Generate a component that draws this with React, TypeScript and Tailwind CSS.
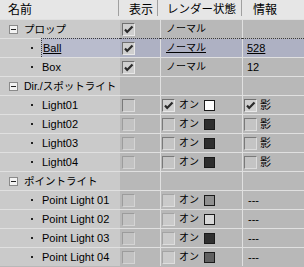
import type { ReactNode } from 'react';

type Box = 'on' | 'off' | 'dim' | 'pale';

type Row =
  | { kind: 'group'; name: string; show?: Box; render?: string }
  | {
      kind: 'item';
      name: string;
      selected?: boolean;
      show: Box;
      render: ReactNode;
      info: ReactNode;
    };

function Check({ state }: { state: Box }) {
  const styles: Record<Box, string> = {
    on: 'border-t-[#707070] border-l-[#707070] border-b-[#e8e8e8] border-r-[#e8e8e8] bg-[#cfcfcf]',
    off: 'border-t-[#7a7a7a] border-l-[#7a7a7a] border-b-[#dcdcdc] border-r-[#dcdcdc] bg-[#c4c4c4]',
    dim: 'border-t-[#9c9c9c] border-l-[#9c9c9c] border-b-[#d4d4d4] border-r-[#d4d4d4] bg-[#c2c2c2]',
    pale: 'border-t-[#a4a4a4] border-l-[#a4a4a4] border-b-[#dedede] border-r-[#dedede] bg-[#cacaca]',
  };
  return (
    <span className={`relative inline-block w-[13px] h-[13px] shrink-0 border ${styles[state]}`}>
      {state === 'on' && (
        <svg width="11" height="11" viewBox="0 0 11 11" className="absolute left-0 top-0">
          <path d="M2 5.5 L4.2 8 L9.5 2.5" stroke="#2a2a2a" strokeWidth="2.2" fill="none" />
        </svg>
      )}
    </span>
  );
}

function Swatch({ color }: { color: string }) {
  return (
    <span
      className="inline-block w-[11px] h-[11px] ml-[5px] shrink-0 border border-[#1a1a1a]"
      style={{ backgroundColor: color }}
    />
  );
}

function LightRender({ on, box, color }: { on?: boolean; box: Box; color: string }) {
  return (
    <div className="flex items-center pl-[1px] whitespace-nowrap">
      <Check state={on ? 'on' : box} />
      <span className="pl-[4px] text-[10px]">オン</span>
      <Swatch color={color} />
    </div>
  );
}

function Shadow({ on }: { on?: boolean }) {
  return (
    <div className="flex items-center pl-[1px]">
      <Check state={on ? 'on' : 'off'} />
      <span className="pl-[3px]">影</span>
    </div>
  );
}

const normal = 'pl-[5px] text-[10px] whitespace-nowrap';

const rows: Row[] = [
  { kind: 'group', name: 'プロップ', show: 'on', render: 'ノーマル' },
  {
    kind: 'item',
    name: 'Ball',
    selected: true,
    show: 'on',
    render: <span className={`${normal} underline`}>ノーマル</span>,
    info: <span className="pl-[4px] underline">528</span>,
  },
  {
    kind: 'item',
    name: 'Box',
    show: 'on',
    render: <span className={normal}>ノーマル</span>,
    info: <span className="pl-[4px]">12</span>,
  },
  { kind: 'group', name: 'Dir./スポットライト' },
  { kind: 'item', name: 'Light01', show: 'off', render: <LightRender on box="on" color="#ffffff" />, info: <Shadow on /> },
  { kind: 'item', name: 'Light02', show: 'dim', render: <LightRender box="off" color="#2e2e2e" />, info: <Shadow /> },
  { kind: 'item', name: 'Light03', show: 'dim', render: <LightRender box="off" color="#2e2e2e" />, info: <Shadow /> },
  { kind: 'item', name: 'Light04', show: 'dim', render: <LightRender box="off" color="#2e2e2e" />, info: <Shadow /> },
  { kind: 'group', name: 'ポイントライト' },
  { kind: 'item', name: 'Point Light 01', show: 'dim', render: <LightRender box="pale" color="#909090" />, info: <span className="pl-[5px]">---</span> },
  { kind: 'item', name: 'Point Light 02', show: 'dim', render: <LightRender box="pale" color="#d8d8d8" />, info: <span className="pl-[5px]">---</span> },
  { kind: 'item', name: 'Point Light 03', show: 'dim', render: <LightRender box="pale" color="#303030" />, info: <span className="pl-[5px]">---</span> },
  { kind: 'item', name: 'Point Light 04', show: 'dim', render: <LightRender box="pale" color="#606060" />, info: <span className="pl-[5px]">---</span> },
];

export default function App() {
  const line = 'border-t border-[#e0e0e0]';
  const focus = 'border-t border-dotted border-[#3a3a3a]';

  return (
    <div
      className="w-[304px] h-[267px] overflow-hidden bg-[#b8b8b8] text-[11px] text-black leading-none"
      style={{ fontFamily: '"Liberation Sans", "Noto Sans CJK JP", sans-serif' }}
    >
      {/* Header */}
      <div className="flex items-center h-[19px] bg-[#e6e6e6] text-[12px] whitespace-nowrap">
        <div className="w-[118px] pl-2">名前</div>
        <span className="w-px h-[16px] self-start bg-[#a0a0a0]" />
        <div className="w-[38px] pl-[10px]">表示</div>
        <span className="w-px h-[16px] self-start bg-[#a0a0a0]" />
        <div className="w-[83px] pl-[9px] text-[11.5px]">レンダー状態</div>
        <span className="w-px h-[16px] self-start bg-[#a0a0a0]" />
        <div className="flex-1 pl-[11px]">情報</div>
      </div>

      {rows.map((row) => {
        const sel = row.kind === 'item' && row.selected;
        const cellBg = sel ? 'bg-[#aeb1c3]' : 'bg-[#b8b8b8]';
        const top = sel ? focus : line;
        return (
          <div key={row.name} className="flex h-[19px] whitespace-nowrap">
            {/* Name */}
            {row.kind === 'group' ? (
              <div className={`w-[120px] flex items-center bg-[#cacaca] ${line}`}>
                <span className="ml-[9px] w-[9px] h-[9px] shrink-0 border border-[#8a8a8a] bg-[#f2f2f2] flex items-center justify-center">
                  <span className="w-[5px] h-px bg-[#202020]" />
                </span>
                <span className="pl-[6px] text-[10.5px]">{row.name}</span>
              </div>
            ) : (
              <div className="w-[120px] flex">
                <div className={`w-[41px] flex items-center bg-[#cacaca] ${line}`}>
                  <span className="ml-[31px] w-[2px] h-[2px] bg-[#202020]" />
                </div>
                <div
                  className={`flex-1 flex items-center pl-px ${
                    sel ? `bg-[#b9bccd] ${focus} border-l border-l-[#3a3a3a]` : `bg-[#cacaca] ${line}`
                  }`}
                >
                  <span className={sel ? 'underline' : ''}>{row.name}</span>
                </div>
              </div>
            )}

            {/* 表示 */}
            <div className={`w-[40px] flex items-center pl-[2px] ${cellBg} ${top}`}>
              {row.show && <Check state={row.show} />}
            </div>

            {/* レンダー状態 */}
            <div className={`w-[82px] flex ${top}`}>
              <span className="w-px bg-[#e0e0e0]" />
              <div className={`flex-1 flex items-center ${cellBg}`}>
                {row.kind === 'group'
                  ? row.render && <span className={normal}>{row.render}</span>
                  : row.render}
              </div>
            </div>

            {/* 情報 */}
            <div className={`flex-1 flex ${top}`}>
              <span className="w-px bg-[#e0e0e0]" />
              <div className={`flex-1 flex items-center ${cellBg}`}>
                {row.kind === 'item' && row.info}
              </div>
            </div>
          </div>
        );
      })}
    </div>
  );
}
